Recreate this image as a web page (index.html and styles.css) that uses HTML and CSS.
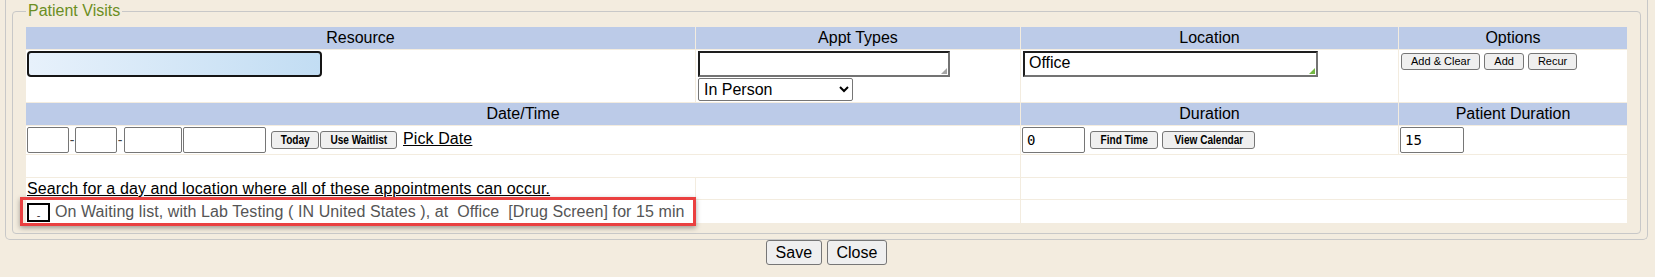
FILE: index.html
```html
<!DOCTYPE html>
<html>
<head>
<meta charset="utf-8">
<title>Patient Visits</title>
<link rel="stylesheet" href="styles.css">
</head>
<body>
<div class="panel">
  <fieldset class="visits">
    <legend class="visits-title">Patient Visits</legend>
    <table class="grid">
      <colgroup>
        <col class="c-resource"><col class="c-appt"><col class="c-loc"><col class="c-opt">
      </colgroup>
      <tr class="head">
        <th>Resource</th><th>Appt Types</th><th>Location</th><th>Options</th>
      </tr>
      <tr class="row-main">
        <td><input class="resource-input" type="text"></td>
        <td>
          <span class="ta-wrap"><textarea class="ta ta-appt"></textarea></span>
          <select class="type-select"><option>In Person</option></select>
        </td>
        <td><span class="ta-wrap ta-green"><textarea class="ta ta-loc">Office</textarea></span></td>
        <td><div class="opts"><button class="btn-sm">Add &amp; Clear</button><button class="btn-sm">Add</button><button class="btn-sm">Recur</button></div></td>
      </tr>
      <tr class="head">
        <th colspan="2">Date/Time</th><th>Duration</th><th>Patient Duration</th>
      </tr>
      <tr class="row-date">
        <td colspan="2">
          <div class="line">
            <input class="d d-mm" type="text"><span class="dash">-</span><input class="d d-dd" type="text"><span class="dash">-</span><input class="d d-yy" type="text"><input class="d d-time" type="text">
            <span class="btn-pair"><button class="btn-n btn-today"><span class="narrow">Today</span></button><button class="btn-n btn-wait"><span class="narrow">Use Waitlist</span></button></span>
            <a class="pick" href="#">Pick Date</a>
          </div>
        </td>
        <td>
          <div class="line">
            <input class="d mono d-dur" type="text" value="0">
            <button class="btn-n btn-find"><span class="narrow">Find Time</span></button>
            <button class="btn-n btn-cal"><span class="narrow">View Calendar</span></button>
          </div>
        </td>
        <td>
          <div class="line">
            <input class="d mono d-pdur" type="text" value="15">
          </div>
        </td>
      </tr>
      <tr class="row-empty">
        <td colspan="2"></td><td colspan="2"></td>
      </tr>
      <tr class="row-search">
        <td><a class="search-link" href="#">Search for a day and location where all of these appointments can occur.</a></td>
        <td></td>
        <td colspan="2"></td>
      </tr>
      <tr class="row-wait">
        <td class="flagged">
          <div class="wait-line">
            <button class="btn-toggle">-</button>
            <span class="wait-text">On Waiting list, with Lab Testing ( IN United States ), at&nbsp; Office&nbsp; [Drug Screen] for 15 min</span>
          </div>
        </td>
        <td></td>
        <td colspan="2"></td>
      </tr>
    </table>
  </fieldset>
</div>
<div class="actions">
  <button class="btn-main">Save</button>
  <button class="btn-main">Close</button>
</div>
</body>
</html>
```

FILE: styles.css
```css
* { box-sizing: border-box; }

html { margin: 0; padding: 0; }

body {
  margin: 0 7px 0 5px;
  padding: 0;
  background: #f3ecdf;
  font-family: "Liberation Sans", Arial, sans-serif;
  font-size: 16px;
  color: #000;
}

.panel {
  border: 1px solid #c8c8c8;
  border-top: 0;
  border-radius: 0 0 5px 5px;
  padding: 2px 6px 5px;
}

.visits {
  margin: 0;
  min-width: 0;
  border: 1px solid #c8c8c8;
  border-radius: 4px;
  padding: 6px 12px 9px;
}

.visits-title {
  color: #6b8e23;
  font-size: 16px;
  line-height: 18px;
  padding: 0 2px;
  margin-left: 1px;
}

.grid {
  border-collapse: separate;
  border-spacing: 1px;
  table-layout: fixed;
  width: 1603px;
}

.c-resource { width: 669px; }
.c-appt { width: 324px; }
.c-loc { width: 377px; }
.c-opt { width: 228px; }

.grid th {
  background: #bccbe8;
  font-weight: normal;
  height: 22px;
  padding: 0 1px;
  line-height: 18px;
  text-align: center;
  vertical-align: middle;
  color: #000;
}

.grid td {
  background: #fff;
  padding: 1px;
  vertical-align: top;
}

.row-main td { height: 52px; }
.row-date td { height: 28px; }
.row-empty td { height: 22px; }
.row-search td { height: 21px; }
.row-wait td { height: 23px; }

/* row 1 */
.resource-input {
  display: block;
  width: 295px;
  height: 26px;
  border: 2px solid #151515;
  border-radius: 4px;
  background: linear-gradient(to right, #e7f1fb, #c2ddf3);
  padding: 0 4px;
  font: inherit;
}

.ta-wrap {
  position: relative;
  display: block;
  width: max-content;
  margin-left: 1px;
}

.ta {
  display: block;
  height: 26px;
  border-style: solid;
  border-width: 2px;
  border-color: #1e1e1e #737373 #737373 #1e1e1e;
  padding: 1px 4px;
  font: inherit;
  line-height: 18px;
  resize: none;
  overflow: hidden;
  background: #fff;
  color: #000;
}

.ta-appt { width: 252px; }
.ta-loc { width: 295px; }

.ta-wrap::after {
  content: "";
  position: absolute;
  right: 3px;
  bottom: 3px;
  width: 0;
  height: 0;
  border-left: 6px solid transparent;
  border-bottom: 6px solid #a5a5a5;
}

.ta-green::after { border-bottom-color: #74b843; }

.type-select {
  display: block;
  margin: 1px 0 0 1px;
  width: 155px;
  height: 23px;
  font: inherit;
  color: #000;
  border: 1px solid #767676;
  border-radius: 2px;
  background: #fff;
  padding: 0 1px;
}

.opts {
  display: flex;
  gap: 4px;
  padding: 2px 0 0 1px;
}

.btn-sm {
  height: 17px;
  padding: 0 9px;
  font-family: "Liberation Sans", Arial, sans-serif;
  font-size: 11px;
  line-height: 13px;
  color: #000;
  background: #efefef;
  border: 1px solid #767676;
  border-radius: 3px;
}

/* row 2 */
.line {
  display: flex;
  align-items: center;
  height: 26px;
}

.d {
  height: 26px;
  border: 1px solid #767676;
  border-radius: 2px;
  background: #fff;
  padding: 0 4px;
  font: inherit;
}

.d-mm, .d-dd { width: 42px; }
.d-yy { width: 58px; }
.d-time { width: 83px; margin-left: 1px; }

.dash {
  display: inline-block;
  width: 6px;
  text-align: center;
  color: #444;
  font-size: 14px;
}

.dash + .d-yy { margin-left: 1px; }

.mono {
  font-family: "DejaVu Sans Mono", "Liberation Mono", monospace;
  font-size: 14px;
  color: #000;
}

.d-dur { width: 63px; }
.d-pdur { width: 64px; }

.btn-pair {
  display: flex;
  gap: 1px;
  margin: 0 5px 0 5px;
}

.btn-n {
  display: inline-flex;
  align-items: center;
  justify-content: center;
  height: 18px;
  padding: 0;
  font-family: "Liberation Sans", Arial, sans-serif;
  font-weight: bold;
  font-size: 12px;
  line-height: 14px;
  color: #000;
  background: #efefef;
  border: 1px solid #767676;
  border-radius: 3px;
  white-space: nowrap;
}

.narrow {
  display: inline-block;
  transform: scaleX(0.84);
}

.btn-today { width: 48px; }
.btn-wait { width: 77px; }
.btn-find { width: 68px; margin-left: 5px; }
.btn-cal { width: 93px; margin-left: 4px; }

.pick {
  color: #000;
  text-decoration: underline;
  line-height: 18px;
  margin-bottom: 2px;
  margin-left: 1px;
  letter-spacing: 0.1px;
}

/* row 4 */
.search-link {
  color: #000;
  text-decoration: underline;
  line-height: 19px;
  display: block;
  letter-spacing: 0.1px;
}

/* row 5 */
.flagged { position: relative; }

.flagged::after {
  content: "";
  position: absolute;
  left: -6px;
  top: -3px;
  right: -1px;
  bottom: -3px;
  border: 3px solid #ea4040;
  box-shadow: 0 2px 5px rgba(0, 0, 0, 0.35);
  pointer-events: none;
}

.wait-line {
  display: flex;
  align-items: center;
  gap: 5px;
  height: 21px;
}

.btn-toggle {
  width: 23px;
  height: 19px;
  margin-top: 1px;
  padding: 0;
  border: 2px solid #000;
  border-radius: 0;
  background: #fff;
  font-family: "Liberation Sans", Arial, sans-serif;
  font-size: 11px;
  line-height: 20px;
  color: #333;
}

.wait-text {
  color: #555;
  line-height: 19px;
  white-space: nowrap;
  letter-spacing: 0.08px;
}

/* footer */
.actions {
  text-align: center;
  margin-left: -7px;
  margin-right: -7px;
  font-size: 16px;
}

.btn-main {
  height: 25px;
  padding: 0 9px;
  font-family: "Liberation Sans", Arial, sans-serif;
  font-size: 16px;
  color: #000;
  background: #efefef;
  border: 1px solid #767676;
  border-radius: 3px;
  vertical-align: top;
}
```
